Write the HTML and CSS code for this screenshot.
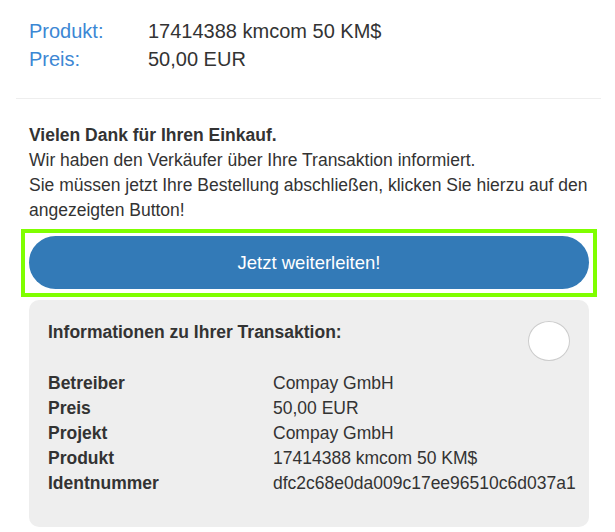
FILE: index.html
```
<!DOCTYPE html>
<html>

<head>
    <link rel="stylesheet" href="styles.css">
</head>

<body>
    <div class="page">
        <div class="summary">
            <span class="summary-label">Produkt:</span>
            <span>17414388 kmcom 50 KM$</span>
            <span class="summary-label">Preis:</span>
            <span>50,00 EUR</span>
        </div>

        <hr class="divider">

        <div class="thanks">
            <strong>Vielen Dank für Ihren Einkauf.</strong><br>
            Wir haben den Verkäufer über Ihre Transaktion informiert.<br>
            Sie müssen jetzt Ihre Bestellung abschließen, klicken Sie hierzu auf den angezeigten Button!
        </div>

        <div class="action">
            <button class="redirect-btn">Jetzt weiterleiten!</button>
        </div>

        <div class="info-card">
            <div class="info-head">
                <h2>Informationen zu Ihrer Transaktion:</h2>
                <span class="info-badge"></span>
            </div>
            <div class="info-rows">
                <span class="info-label">Betreiber</span>
                <span>Compay GmbH</span>
                <span class="info-label">Preis</span>
                <span>50,00 EUR</span>
                <span class="info-label">Projekt</span>
                <span>Compay GmbH</span>
                <span class="info-label">Produkt</span>
                <span>17414388 kmcom 50 KM$</span>
                <span class="info-label">Identnummer</span>
                <span>dfc2c68e0da009c17ee96510c6d037a1</span>
            </div>
        </div>
    </div>
</body>

</html>
```

FILE: styles.css
```
body {
    margin: 0;
    font-family: "Liberation Sans", Arial, sans-serif;
    font-size: 17.5px;
    color: #333;
    background-color: #fff;
}

.page {
    padding: 0 14px 0 16px;
}

.summary {
    display: grid;
    grid-template-columns: 119px auto;
    padding: 17px 0 0 13px;
    font-size: 20px;
    line-height: 28px;
}

.summary-label {
    color: #3c87d4;
}

.divider {
    border: none;
    border-top: 1px solid #eee;
    margin: 25px 0 0 0;
}

.thanks {
    padding: 0 0 0 13px;
    margin: 24px -10px 0 0;
    line-height: 25px;
}

.action {
    margin: 6px 4px 0 5px;
    padding: 3px 4px 4px 4px;
    border: 4px solid #7fff00;
}

.redirect-btn {
    display: block;
    width: 100%;
    height: 53px;
    border: none;
    border-radius: 27px;
    background-color: #337ab7;
    color: #fff;
    font-family: inherit;
    font-size: 18.5px;
    cursor: pointer;
}

.info-card {
    margin: 3px 12px 0 13px;
    padding: 20px 19px 31px 19px;
    background-color: #eee;
    border-radius: 10px;
}

.info-head {
    display: flex;
    justify-content: space-between;
    align-items: flex-start;
}

.info-head h2 {
    margin: 0;
    font-size: 17.5px;
    line-height: 25px;
}

.info-badge {
    width: 40px;
    height: 38px;
    border: 1px solid #ccc;
    border-radius: 50%;
    background-color: #fff;
    margin-top: 1px;
}

.info-rows {
    display: grid;
    grid-template-columns: 225px auto;
    margin-top: 10px;
    line-height: 25px;
}

.info-label {
    font-weight: bold;
}
```
